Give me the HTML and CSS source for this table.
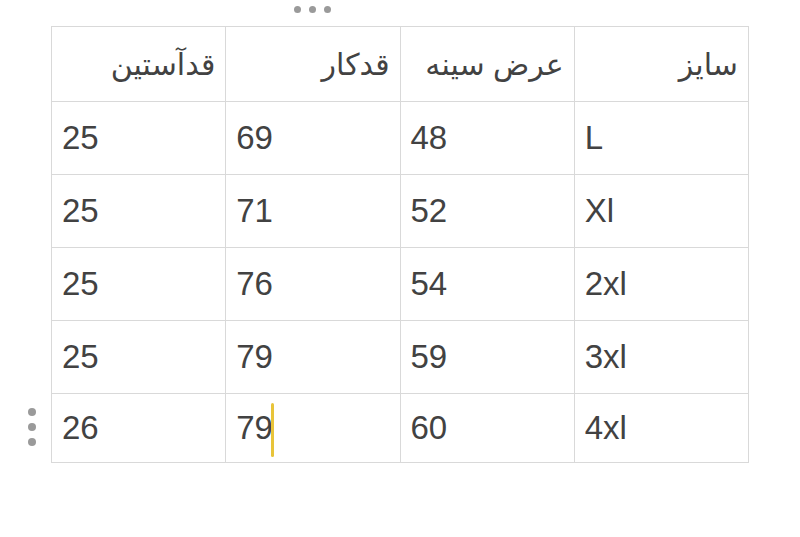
FILE: index.html
```html
<!DOCTYPE html>
<html lang="fa">
<head>
<meta charset="utf-8">
<link rel="stylesheet" href="styles.css">
</head>
<body>
<div class="page">
  <div class="table-wrap">
    <div class="col-handle"><span></span><span></span><span></span></div>
    <div class="row-handle"><span></span><span></span><span></span></div>
    <table class="size-table" dir="rtl">
      <thead>
        <tr><th>سایز</th><th>عرض سینه</th><th>قدکار</th><th>قدآستین</th></tr>
      </thead>
      <tbody>
        <tr><td>L</td><td>48</td><td>69</td><td>25</td></tr>
        <tr><td>Xl</td><td>52</td><td>71</td><td>25</td></tr>
        <tr><td>2xl</td><td>54</td><td>76</td><td>25</td></tr>
        <tr><td>3xl</td><td>59</td><td>79</td><td>25</td></tr>
        <tr><td>4xl</td><td>60</td><td><span class="cursor-cell">79<span class="cursor"></span></span></td><td>26</td></tr>
      </tbody>
    </table>
  </div>
</div>
</body>
</html>
```

FILE: styles.css
```css
html, body {
  margin: 0;
  padding: 0;
  background: #ffffff;
}
.page {
  padding: 26px 0 0 51px;
}
.table-wrap {
  position: relative;
  width: 698px;
}
.size-table {
  border-collapse: collapse;
  table-layout: fixed;
  width: 698px;
  font-family: "Liberation Sans", "DejaVu Sans", sans-serif;
  color: #424242;
}
.size-table th,
.size-table td {
  border: 1px solid #d9d9d9;
  width: 174px;
  padding: 0 10px;
  box-sizing: border-box;
  vertical-align: middle;
}
.size-table th {
  height: 75px;
  text-align: right;
  font-weight: normal;
  font-size: 30px;
  padding-right: 10px;
  direction: rtl;
}
.size-table td {
  height: 73px;
  text-align: left;
  direction: ltr;
  font-size: 33px;
}
.size-table tbody tr:last-child td {
  height: 69px;
}
.cursor-cell {
  position: relative;
}
.cursor {
  position: absolute;
  right: -1px;
  top: -6px;
  width: 3px;
  height: 54px;
  border-radius: 2px;
  background: #e8c43a;
}
.col-handle {
  position: absolute;
  top: -20px;
  left: 243px;
  display: flex;
  gap: 8px;
}
.col-handle span,
.row-handle span {
  display: block;
  width: 7px;
  height: 7px;
  border-radius: 50%;
  background: #9a9a9a;
}
.row-handle {
  position: absolute;
  left: -23px;
  top: 382px;
  display: flex;
  flex-direction: column;
  gap: 7px;
}
.row-handle span {
  width: 8px;
  height: 8px;
}
```
